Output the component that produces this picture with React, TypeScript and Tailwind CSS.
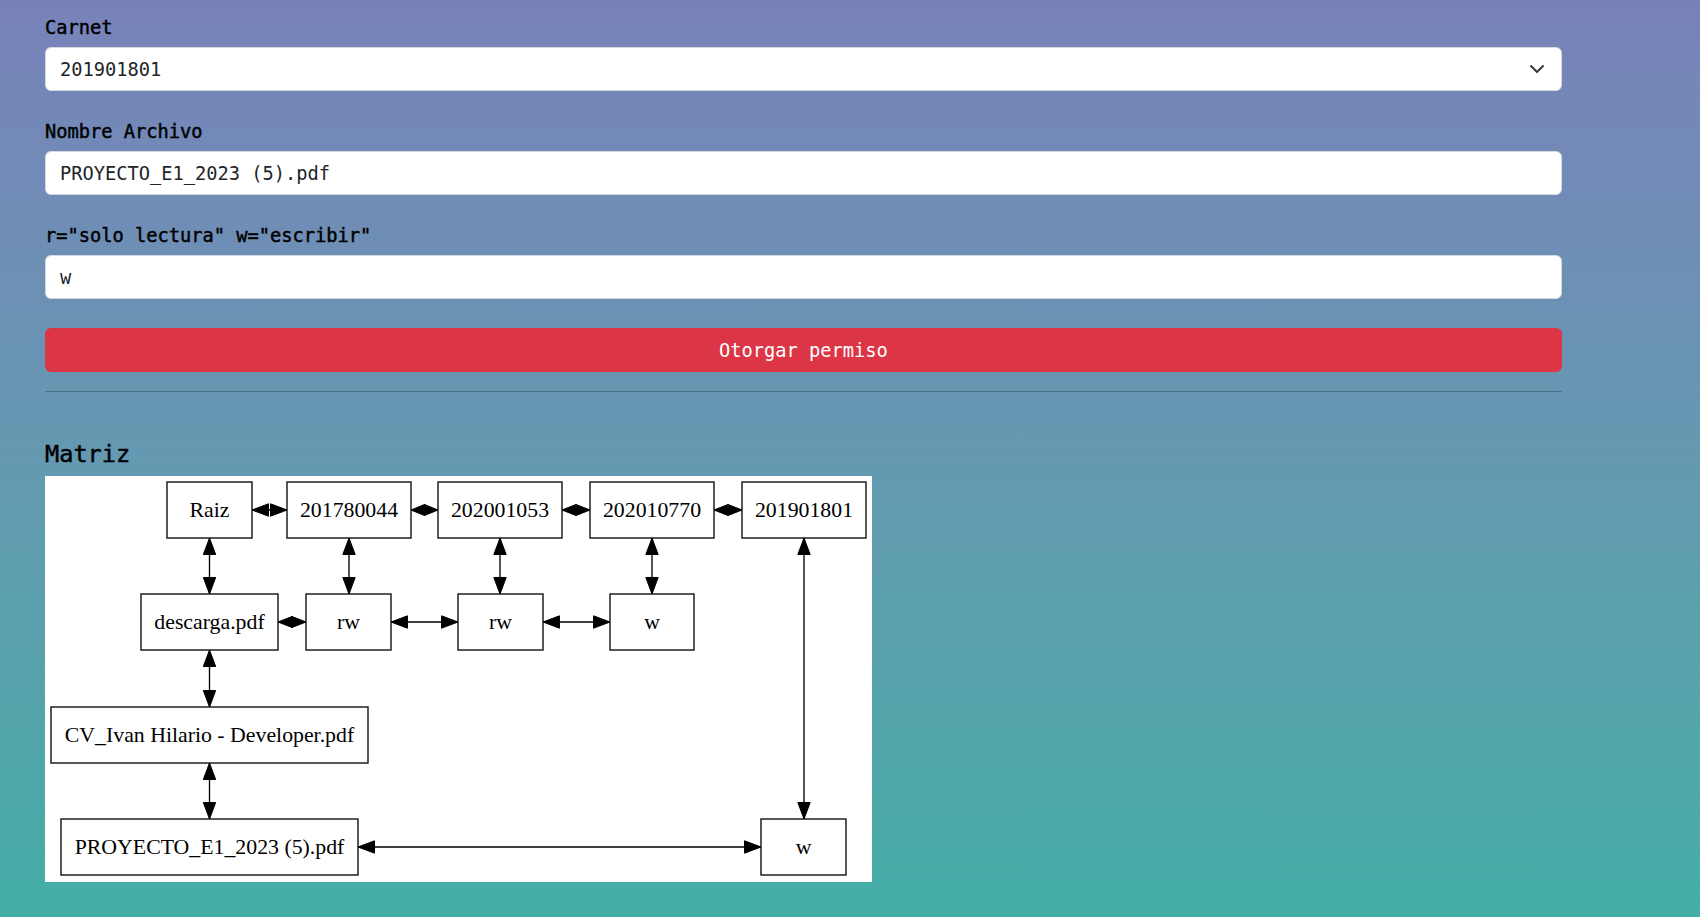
const mono = "font-['DejaVu_Sans_Mono','Liberation_Mono',monospace]"
const medium = "[-webkit-text-stroke:0.45px_black]"

type Box = { label: string; x: number; y: number; w: number }

const H = 56
const boxes: Box[] = [
  { label: "Raiz", x: 122, y: 6, w: 85 },
  { label: "201780044", x: 242, y: 6, w: 124 },
  { label: "202001053", x: 393, y: 6, w: 124 },
  { label: "202010770", x: 545, y: 6, w: 124 },
  { label: "201901801", x: 697, y: 6, w: 124 },
  { label: "descarga.pdf", x: 96, y: 118, w: 137 },
  { label: "rw", x: 261, y: 118, w: 85 },
  { label: "rw", x: 413, y: 118, w: 85 },
  { label: "w", x: 565, y: 118, w: 84 },
  { label: "CV_Ivan Hilario - Developer.pdf", x: 6, y: 231, w: 317 },
  { label: "PROYECTO_E1_2023 (5).pdf", x: 16, y: 343, w: 297 },
  { label: "w", x: 716, y: 343, w: 85 },
]

// horizontal edges: [x1, x2, y] (both directions)
const hEdges: [number, number, number][] = [
  [207, 242, 34],
  [366, 393, 34],
  [517, 545, 34],
  [669, 697, 34],
  [233, 261, 146],
  [346, 413, 146],
  [498, 565, 146],
  [313, 716, 371],
]

// vertical edges: [x, y1, y2]
const vEdges: [number, number, number][] = [
  [164.5, 62, 118],
  [304, 62, 118],
  [455, 62, 118],
  [607, 62, 118],
  [759, 62, 343],
  [164.5, 174, 231],
  [164.5, 287, 343],
]

function arrowH(tip: number, y: number, dir: 1 | -1, len: number, hw: number) {
  const base = tip + dir * len
  return `${tip},${y} ${base},${y - hw} ${base},${y + hw}`
}

function arrowV(x: number, tip: number, dir: 1 | -1, len: number, hw: number) {
  const base = tip + dir * len
  return `${x},${tip} ${x - hw},${base} ${x + hw},${base}`
}

function Matrix() {
  return (
    <svg width="827" height="406" viewBox="0 0 827 406" className="block bg-white">
      {hEdges.map(([x1, x2, y], i) => {
        const gap = x2 - x1
        const len = Math.min(16.5, gap / 2)
        const hw = len < 16.5 ? 5.5 : 6.2
        return (
          <g key={"h" + i}>
            <line x1={x1} y1={y} x2={x2} y2={y} stroke="black" strokeWidth="1.35" />
            <polygon points={arrowH(x1, y, 1, len, hw)} fill="black" stroke="black" strokeWidth="1" />
            <polygon points={arrowH(x2, y, -1, len, hw)} fill="black" stroke="black" strokeWidth="1" />
          </g>
        )
      })}
      {vEdges.map(([x, y1, y2], i) => (
        <g key={"v" + i}>
          <line x1={x} y1={y1} x2={x} y2={y2} stroke="black" strokeWidth="1.35" />
          <polygon points={arrowV(x, y1, 1, 16.5, 6.2)} fill="black" stroke="black" strokeWidth="1" />
          <polygon points={arrowV(x, y2, -1, 16.5, 6.2)} fill="black" stroke="black" strokeWidth="1" />
        </g>
      ))}
      {boxes.map((b, i) => (
        <g key={"b" + i}>
          <rect x={b.x} y={b.y} width={b.w} height={H} fill="white" stroke="#111" strokeWidth="1.4" />
          <text
            x={b.x + b.w / 2}
            y={b.y + 34.5}
            textAnchor="middle"
            fontFamily="'Liberation Serif', 'Times New Roman', serif"
            fontSize="21.8"
            fill="black"
          >
            {b.label}
          </text>
        </g>
      ))}
    </svg>
  )
}

function Field({ label, value, select }: { label: string; value: string; select?: boolean }) {
  return (
    <div>
      <label className={`block text-[18.7px] leading-[28px] pt-[1px] mb-[5px] text-black ${medium}`}>{label}</label>
      <div className="h-[44px] w-full rounded-[6px] border border-[#d6dae0] bg-white pl-[14px] pr-[16px] flex items-center justify-between">
        <span className="pt-[2px] text-[18.7px] text-[#212529]">{value}</span>
        {select && (
          <svg width="16" height="12" viewBox="0 2 16 12" fill="none">
            <path d="m2 5 6 6 6-6" stroke="#343a40" strokeWidth="2" strokeLinecap="round" strokeLinejoin="round" />
          </svg>
        )}
      </div>
    </div>
  )
}

export default function App() {
  return (
    <div className={`min-h-screen w-full bg-gradient-to-b from-[#7882ba] to-[#43aea6] ${mono}`}>
      <div className="px-[45px] pt-[13px] pb-[35px]">
        <div className="w-[1517px] flex flex-col gap-[26px]">
          <Field label="Carnet" value="201901801" select />
          <Field label="Nombre Archivo" value="PROYECTO_E1_2023 (5).pdf" />
          <Field label={'r="solo lectura" w="escribir"'} value="w" />
        </div>
        <div className="w-[1517px]">
          <button className="mt-[29px] h-[44px] w-full rounded-[6px] bg-[#dc3545] pt-[2px] text-white text-[18.7px]">
            Otorgar permiso
          </button>
          <div className="mt-[19px] border-t border-black/25" />
        </div>
        <h2 className={`mt-[47px] mb-[7px] text-[23.6px] leading-[30px] text-black ${medium}`}>Matriz</h2>
        <Matrix />
      </div>
    </div>
  )
}
